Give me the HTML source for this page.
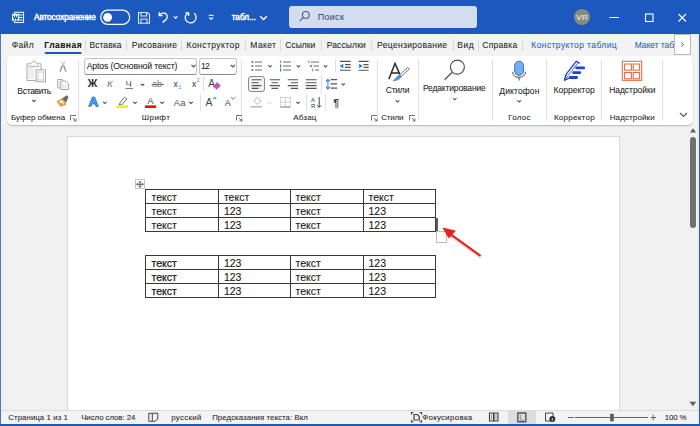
<!DOCTYPE html>
<html><head><meta charset="utf-8">
<style>
*{margin:0;padding:0;box-sizing:border-box}
html,body{width:700px;height:426px;overflow:hidden;background:#f0f0f0;font-family:"Liberation Sans",sans-serif}
.a{position:absolute}
.t{position:absolute;white-space:pre;line-height:1;font-family:"Liberation Sans",sans-serif;-webkit-text-stroke:0.07px currentColor}
.ln{position:absolute;background:#383838;box-shadow:0 0 0.6px rgba(0,0,0,.35)}
svg{position:absolute;overflow:visible}
</style></head><body>
<div class="a" style="left:0;top:126px;width:700px;height:284px;background:#f0f0f0"></div>
<div class="a" style="left:67px;top:136px;width:553px;height:274px;background:#d8d8d8"></div>
<div class="a" style="left:68px;top:137px;width:551px;height:273px;background:#fff"></div>
<div class="a" style="left:0;top:0;width:700px;height:34px;background:#1b59be"></div>
<div class="a" style="left:0;top:34px;width:700px;height:92px;background:#f3f3f3"></div>
<div class="a" style="left:7px;top:56px;width:686px;height:69px;background:#fff;border-radius:5px;box-shadow:0 1px 1.5px rgba(0,0,0,.25)"></div>
<div class="a" style="left:0;top:410px;width:700px;height:16px;background:#f3f3f3;border-top:1px solid #dcdcdc"></div>
<div class="a" style="left:508px;top:410px;width:28px;height:14px;background:#dcdcdc"></div>
<div class="a" style="left:0;top:34px;width:1px;height:392px;background:#4f72cf"></div><div class="a" style="left:1px;top:34px;width:1px;height:376px;background:#f8f8f8"></div>
<div class="a" style="left:698px;top:34px;width:1px;height:392px;background:#dfe6f3"></div><div class="a" style="left:699px;top:34px;width:1px;height:392px;background:#2a5fc8"></div>
<div class="a" style="left:0;top:424px;width:700px;height:2px;background:#1b59be"></div>
<div class="a" style="left:574.2px;top:9.2px;width:15.8px;height:15.8px;border-radius:50%;background:#878a7e"></div>
<!-- search box -->
<div class="a" style="left:289px;top:6px;width:188px;height:22px;background:#d3ddef;border-radius:3px"></div>
<!-- font boxes -->
<div class="a" style="left:84px;top:58px;width:113px;height:17px;border:1px solid #c4c4c4;border-bottom-color:#8a8a8a;border-radius:3px;background:#fff"></div>
<div class="a" style="left:199px;top:58px;width:38px;height:17px;border:1px solid #c4c4c4;border-bottom-color:#8a8a8a;border-radius:3px;background:#fff"></div>
<!-- align left selected -->
<div class="a" style="left:248px;top:75.8px;width:17px;height:16px;border:1.4px solid #8a8a8a;border-radius:3px;background:#f3f3f3"></div>
<!-- tab scroll button -->
<div class="a" style="left:674px;top:34px;width:17px;height:21px;background:#fff;border:1px solid #b8b8b8"></div>
<!-- scrollbar -->
<div class="a" style="left:690px;top:137px;width:6px;height:91px;background:#6f6f6f;border-radius:3px"></div>
<!-- page table handle squares -->
<div class="a" style="left:135px;top:179px;width:10px;height:10px;border:1px solid #c4c4c4;background:#fff"></div>
<div class="a" style="left:436px;top:231px;width:11px;height:12px;border:1px solid #bdbdbd;background:#fff"></div>
<div class="a" style="left:435px;top:218px;width:3px;height:13px;background:#5e5e5e"></div>

<svg class="a" style="left:0;top:0" width="700" height="426" viewBox="0 0 700 426">
<g fill="none" stroke="#fff" stroke-width="1.1">
 <!-- word icon -->
 <rect x="14.5" y="12.3" width="9" height="10.2" stroke="#e8eefa"/>
 <path d="M19.5 15H22.5M19.5 17.5H22.5M19.5 20H22.5" stroke="#fff"/>
 <rect x="12" y="13.8" width="7.3" height="7" fill="#fff" stroke="none"/>
 <path d="M13.2 15.3L14.4 19.6L15.6 16.4L16.8 19.6L18 15.3" stroke="#1b59be" stroke-width="1.1"/>
 <!-- toggle -->
 <rect x="100.7" y="10.2" width="29" height="14.2" rx="7.1" stroke-width="1.3"/>
 <circle cx="107.6" cy="17.3" r="4.4" fill="#fff" stroke="none"/>
 <!-- save -->
 <path d="M138.5 12.5H147.5L149.5 14.5V23.3H138.5Z" stroke="#dfe6f4"/>
 <path d="M141 12.5V16H146.5V12.5M141 23.3V19H147V23.3" stroke="#dfe6f4"/>
 <!-- undo -->
 <path d="M159.3 15.2C161.5 12.2 166.8 12.2 167.2 16.3C167.5 19.3 165 21 162.5 22.3" stroke-width="1.3"/>
 <path d="M159.2 12.3V15.6H162.5" stroke-width="1.3"/>
 <path d="M173.8 16.4L175.6 18.2L177.4 16.4" stroke-width="1.25"/>
 <!-- redo -->
 <path d="M188.2 13.3C185.6 14.7 184.8 17.5 185.7 19.7C186.9 22.8 191.2 23.8 194 21.7C196.6 19.7 196.9 15.5 194.2 13.2" stroke-width="1.3"/>
 <path d="M185.3 12.8H188.6V16.1" stroke-width="1.3"/>
 <!-- customize -->
 <path d="M208.8 15.3H213.5" stroke-width="1.1"/>
 <path d="M209.2 17.5L211.2 19.3L213.2 17.5" stroke-width="1.1"/>
 <!-- doc chevron -->
 <path d="M260.2 16.3L263.5 19.5L266.8 16.3" stroke-width="1.4"/>
 <!-- window controls -->
 <path d="M609.5 17.5H619" stroke-width="1"/>
 <rect x="645.5" y="14" width="7.5" height="7.5" stroke-width="1.1"/>
 <path d="M678.5 14L686 21.5M686 14L678.5 21.5" stroke-width="1.1"/>
</g>
<!-- search icon -->
<g fill="none" stroke="#4a5a7c" stroke-width="1.1">
 <circle cx="305.8" cy="14.9" r="3.4"/>
 <path d="M303.4 17.3L299.6 21.1"/>
</g>
<!-- tab separators -->
<g stroke="#d9d9d9" stroke-width="1">
 <path d="M85.5 39.5V51M126.5 39.5V51M181.5 39.5V51M245.5 39.5V51M280.5 39.5V51M321.5 39.5V51M371.5 39.5V51M453.5 39.5V51M478.5 39.5V51M522.5 39.5V51"/>
</g>
<rect x="44.6" y="52" width="37" height="2" rx="1" fill="#1b59be"/>
<path d="M681.2 42.5L683.6 44.5L681.2 46.5" fill="none" stroke="#666" stroke-width="1"/>
<!-- group separators -->
<g stroke="#e0e0e0" stroke-width="1">
 <path d="M78.5 60V121M241.5 60V121M377.5 60V121M418.5 60V121M492.5 60V121M546.5 60V121M601.5 60V121M662.5 60V121"/>
 <path d="M203.5 77V92M200.5 95V111M321.5 75V93M306.5 94V111M325.5 94V111M335.5 59V72"/>
</g>
<!-- chevrons dark -->
<g fill="none" stroke="#555" stroke-width="1.1">
 <path d="M32.3 100L34 101.7L35.7 100"/>
 <path d="M191.5 65L193.5 67L195.5 65M230.8 65L232.8 67L234.8 65"/>
 <path d="M140.8 83.8L142.5 85.4L144.2 83.8M103 101.8L104.8 103.4L106.6 101.8M133.2 101.8L135 103.4L136.8 101.8M160.3 101.8L162.1 103.4L163.9 101.8M189.2 101.8L191 103.4L192.8 101.8"/>
 <path d="M268.3 65.3L270 67L271.7 65.3M296.8 65.3L298.5 67L300.2 65.3M323.8 65.3L325.5 67L327.2 65.3M341.5 83.3L343.2 85L344.9 83.3M296.3 101.8L298 103.4L299.7 101.8"/>
 <path d="M395.7 100.3L397.5 102L399.3 100.3M453.1 98.2L454.8 99.8L456.5 98.2M517.4 100.3L519.2 102L521 100.3"/>
 <path d="M680 113L683.5 116.5L687 113"/>
</g>
<path d="M267.8 102.3L269.6 103.8L271.4 102.3" fill="none" stroke="#c8c8c8" stroke-width="1"/>
<!-- launchers -->
<g fill="none" stroke="#666" stroke-width="0.9">
 <path d="M70.5 120.5V115.5H76M73 118L76 121M76 118.5V121H73.5"/>
 <path d="M236.5 120.5V115.5H242M239 118L242 121M242 118.5V121H239.5"/>
 <path d="M371.5 120.5V115.5H377M374 118L377 121M377 118.5V121H374.5"/>
 <path d="M409.5 120.5V115.5H415M412 118L415 121M415 118.5V121H412.5"/>
</g>
<!-- clipboard icons -->
<g fill="none" stroke="#a9a9a9" stroke-width="1">
 <path d="M30 63.8H27V80.5H36"/>
 <path d="M38 63.8H41V69.5"/>
 <path d="M29.9 64.3L33.8 61L38 64.3M28.5 66.3H39.5"/>
 <path d="M29 66V79M31 66V79M33 66V79"  stroke="#d0d0d0" stroke-width="0.7"/>
 <rect x="36" y="69.8" width="9.5" height="12"/>
 <rect x="38" y="72" width="5.5" height="8" stroke="#c8c8c8"/>
 <path d="M60.8 61.2L64.2 66.5M65.2 61.2L61.8 66.5" stroke="#b5b5b5" stroke-width="0.9"/>
 <path d="M62 66.3L60.3 71M64 66.3L65.7 71" stroke="#a8a8a8" stroke-width="1.8" stroke-linecap="round"/>
 <path d="M57.7 79.5H62.5V88H57.7Z"/>
 <path d="M60.8 81H65.5L68.5 84V89.5H60.8Z" fill="#fff"/>
 <path d="M59.3 81.5V87M63 84V88M65.5 85V88" stroke="#cfcfcf" stroke-width="0.8"/>
</g>
<path d="M57.6 101.6L62.6 98.8L65.4 104.2L61 106Z" fill="#fff3e0" stroke="#f08a20" stroke-width="1.3" stroke-linejoin="round"/>
<path d="M58.5 102.5L64.5 103.8L61 105.6Z" fill="#f59a30"/>
<path d="M62.3 98.3L66.3 95.6C67.6 95.2 68.5 96.3 68.2 97.6L66 103Z" fill="#6a6a6a"/>
<!-- font group icons -->
<g font-family="Liberation Sans" >
 <text x="87.8" y="87.4" font-size="10.5" font-weight="bold" fill="#2a2a2a">Ж</text>
 <text x="107" y="87.2" font-size="9.5" font-style="italic" fill="#6e6e6e">К</text>
 <text x="125.6" y="87.2" font-size="9.5" fill="#5a5a5a">Ч</text>
 <text x="152" y="87.2" font-size="9" fill="#777">ab</text>
 <text x="173.5" y="86.8" font-size="8.5" fill="#333">x</text>
 <text x="192" y="86.8" font-size="8.5" fill="#333">x</text>
 <text x="178.2" y="89.4" font-size="5" fill="#2f8fe0">2</text>
 <text x="196.8" y="82" font-size="5" fill="#2f8fe0">2</text>
 <text x="208.2" y="87.2" font-size="10" fill="#444">A</text>
 <text x="173.8" y="105.6" font-size="9.5" fill="#555">Aa</text>
 <text x="205.6" y="105.6" font-size="10.5" fill="#444">A</text>
 <text x="224.8" y="105.6" font-size="9" fill="#444">A</text>
 <text x="147.4" y="104.2" font-size="9" fill="#444">A</text>
</g>
<path d="M125.5 88.6H133" stroke="#666" stroke-width="0.9"/>
<path d="M151.5 84.5H164" stroke="#666" stroke-width="0.9"/>
<path d="M213.5 86.2L217.2 82.6L220.3 85.7L216.6 89.3Z" fill="#c44fc8" stroke="#a030b0" stroke-width="0.6"/>
<path d="M212.5 98.8L214.8 96.8L217 98.8Z" fill="#3b8de0"/>
<path d="M231 97.2L233.2 99.2L235.4 97.2" fill="none" stroke="#3b8de0" stroke-width="1"/>
<!-- blue A -->
<path d="M88.6 106.4L92.3 97H94.7L98.4 106.4H96L95.1 104H91.9L91 106.4ZM92.6 102H94.4L93.5 99.4Z" fill="#4a9ae8" stroke="#2a6fc4" stroke-width="0.7"/>
<!-- highlighter -->
<path d="M119.5 103.5L124.5 97.2L126.8 99L121.7 105Z" fill="none" stroke="#707070" stroke-width="1"/>
<path d="M119.3 103.6L118.6 105.2L121.2 105" fill="#707070"/>
<rect x="116.5" y="105.2" width="11.5" height="2.8" fill="#f6ee1a"/>
<rect x="145" y="105.4" width="11.2" height="2.6" fill="#e81010"/>
<!-- paragraph icons -->
<g fill="#2f7fd8">
 <circle cx="252.4" cy="62" r="1.1"/><circle cx="252.4" cy="66" r="1.1"/><circle cx="252.4" cy="70" r="1.1"/>
 <rect x="280.2" y="60.5" width="0.9" height="2.6"/><rect x="280" y="64.5" width="1.2" height="3"/><rect x="280" y="68.5" width="1.2" height="3"/>
 <rect x="308.5" y="60.5" width="0.9" height="2.6"/><circle cx="311" cy="66" r="1.1"/><rect x="312.3" y="68.6" width="0.9" height="2.8"/>
</g>
<g stroke="#6a6a6a" stroke-width="1">
 <path d="M255 62H262M255 66H262M255 70H262"/>
 <path d="M283 62H291M283 66H291M283 70H291"/>
 <path d="M311 62H319M313.5 66H319M315 70H319"/>
</g>
<g stroke="#555" stroke-width="1.1">
 <path d="M251.7 79.8H261.4M251.7 82.7H258.5M251.7 85.6H261.4M251.7 88.4H258.5"/>
 <path d="M269.7 79.8H280M271.5 82.7H278.2M269.7 85.6H280M271.5 88.4H278.2"/>
 <path d="M287.7 79.8H298M290.8 82.7H298M287.7 85.6H298M290.8 88.4H298"/>
 <path d="M305.7 79.8H316.6M305.7 82.7H316.6M305.7 85.6H316.6M305.7 88.4H316.6"/>
 <path d="M340 61.4H350.7M345 64.6H350.7M345 67.4H350.7M340 70.3H350.7"/>
 <path d="M358.6 61.4H368.6M363.5 64.6H368.6M363.5 67.4H368.6M358.6 70.3H368.6"/>
 <path d="M330.7 79.6H337.1M330.7 83.9H337.1M330.7 88.1H337.1"/>
</g>
<g fill="#2f7fd8" stroke="#2f7fd8" stroke-width="0.8">
 <path d="M340.2 66L343 64.3V67.7Z"/>
 <path d="M362.2 66L359.4 64.3V67.7Z"/>
 <path d="M327.9 80.5V88" fill="none" stroke-width="1"/>
 <path d="M326 81.5L327.9 79.6L329.8 81.5M326 87L327.9 88.9L329.8 87" fill="none" stroke-width="1.1"/>
</g>
<!-- shading & borders -->
<path d="M254 101L257.5 97.2L261 101L257.5 104.3Z" fill="none" stroke="#bdbdbd" stroke-width="1"/>
<rect x="251" y="106" width="11" height="1.5" fill="#b8b8b8"/>
<g fill="none" stroke="#cfcfcf" stroke-width="0.9">
 <rect x="280.5" y="97.5" width="9.8" height="9.5"/>
 <path d="M285.4 97.5V107M280.5 102.2H290.3"/>
</g>
<path d="M280.5 107H290.3" stroke="#8a8a8a" stroke-width="1"/>
<g font-family="Liberation Sans">
 <text x="310.8" y="101.6" font-size="5.8" font-weight="bold" fill="#2f7fd8">A</text>
 <text x="310.8" y="107.6" font-size="6" fill="#333">Я</text>
 <text x="333.2" y="106.8" font-size="10.5" font-weight="bold" fill="#444">¶</text>
</g>
<path d="M319.2 97V107.2M317.3 105.3L319.2 107.4L321.1 105.3" fill="none" stroke="#444" stroke-width="1"/>
<!-- styles icon -->
<path d="M388.8 79.3L395 63.5L399.8 74.4M391 73H400" fill="none" stroke="#2a2a2a" stroke-width="1.45"/>
<path d="M399.6 74.8L407.6 67.6L409.2 69.3L401.2 76.4Z" fill="#fff" stroke="#666" stroke-width="0.9"/>
<path d="M393 80.8C396.2 80.8 399.2 79.6 401.5 76.8L399.5 74.8C397.4 75.6 396.6 78.6 393 80.8Z" fill="#4a94e4" stroke="#2f78cf" stroke-width="0.6"/>
<!-- magnifier -->
<circle cx="457.4" cy="67.1" r="7" fill="none" stroke="#555" stroke-width="1.2"/>
<path d="M452.2 72.3L444.6 79.7" stroke="#555" stroke-width="1.3"/>
<!-- mic -->
<rect x="514.7" y="61.2" width="8.8" height="14.2" rx="4.4" fill="#72aef0" stroke="#3274c8" stroke-width="1"/>
<path d="M512.6 71.8C512.6 75.3 515.5 77.4 519 77.4C522.5 77.4 525.5 75.3 525.5 71.8M519 77.4V80.5" fill="none" stroke="#6b5a50" stroke-width="1.1"/>
<!-- corrector -->
<path d="M564.3 80.5L566.2 74.2L576.4 61.2L579.8 63.4" fill="none" stroke="#1c43d4" stroke-width="1.3" stroke-linejoin="round"/>
<path d="M564.3 80.5L577.6 63.2" fill="none" stroke="#1c43d4" stroke-width="0.8"/>
<path d="M564.3 80.5L569.5 77.8" fill="none" stroke="#1c43d4" stroke-width="1.3"/>
<g stroke="#1c43d4" stroke-width="2.8" stroke-linecap="round">
 <path d="M576.6 67.8H583.8M573.6 72.7H579.8M570.2 77.5H576.6"/>
</g>
<!-- addins -->
<g fill="none" stroke="#e6693f" stroke-width="1.05">
 <rect x="622.3" y="61.3" width="19.4" height="19"/>
 <rect x="624.6" y="64" width="6.8" height="6.2"/>
 <rect x="633.2" y="64" width="6.4" height="6.2"/>
 <rect x="624.6" y="72.5" width="6.8" height="6.3"/>
 <rect x="633.2" y="72.5" width="6.4" height="6.3"/>
</g>
<!-- scrollbar arrows -->
<path d="M690 132.5L693 128.3L696 132.5Z" fill="#606060"/>
<path d="M689.5 401.8H696.3L692.9 406.2Z" fill="#606060"/>
<!-- table move handle -->
<g stroke="#444" stroke-width="0.9" fill="none">
 <path d="M140 181.3V187.3M136.8 184.3H143.2"/>
 <path d="M139 182.3L140 181.2L141 182.3M139 186.3L140 187.4L141 186.3M137.8 183.3L136.7 184.3L137.8 185.3M142.2 183.3L143.3 184.3L142.2 185.3"/>
</g>
<!-- arrow -->
<g>
 <path d="M480 255.5L448 233" stroke="rgba(0,0,0,0.12)" stroke-width="3.5" transform="translate(1,1.5)"/>
 <path d="M479.8 255.4L449 233.2" stroke="#e8211c" stroke-width="2.1" stroke-linecap="round"/>
 <path d="M443 228L455.3 230.9L448.8 237.9Z" fill="#e8211c" stroke="#e8211c" stroke-width="0.8" stroke-linejoin="round"/>
</g>
<!-- status icons -->
<g fill="none" stroke="#444" stroke-width="1">
 <path d="M148.8 413.3H152.3V421.3H148.8Z"/>
 <path d="M152.3 413.3H157.8V419L155 421.3H152.3"/>
 <path d="M411.5 414.5V412.5H413.5M419.5 412.5H421.5V414.5M421.5 420V422H419.5M413.5 422H411.5V420" stroke-width="1.2"/>
 <path d="M414 414.5H417.3L419.3 416.5V420H414Z" stroke-width="1.2"/>
 <path d="M489.5 413H493.5V421H489.5ZM494 413H498V421H494Z" stroke="#3a3a3a" stroke-width="1.1"/>
 <path d="M491.5 414.5V419.5M496 414.5V419.5" stroke="#777" stroke-width="0.8"/>
 <path d="M517.8 413H525.8V421.8H517.8Z" stroke="#555" stroke-width="1.4"/>
 <path d="M520.3 414.5V420H524" stroke="#888" stroke-width="0.9"/>
 <path d="M545.5 413H553V421H545.5Z"/>
 <path d="M568 417.5H573.8M575 417.5H648M650.5 417.5H656M653.2 414.7V420.3" stroke="#666"/>
</g>
<circle cx="552.3" cy="419" r="3" fill="#333"/>
<path d="M552.3 418.2V420.6" stroke="#fff" stroke-width="0.9"/>
<rect x="610.2" y="413.8" width="3.5" height="7.5" fill="#555"/>
</svg>

<div class="t" style="left:34.00px;top:13.56px;font-size:8.2px;font-weight:normal;color:#fff;letter-spacing:-0.056px;-webkit-text-stroke:0.45px #fff">Автосохранение</div><div class="t" style="left:231.70px;top:13.56px;font-size:8.2px;font-weight:normal;color:#fff;letter-spacing:0.010px;-webkit-text-stroke:0.45px #fff">табл...</div><div class="t" style="left:317.70px;top:13.38px;font-size:9px;font-weight:normal;color:#2e4270;letter-spacing:0.312px;-webkit-text-stroke:0px">Поиск</div><div class="t" style="left:576.30px;top:13.93px;font-size:8px;font-weight:normal;color:#f4f4f4;letter-spacing:0.275px">VR</div><div class="t" style="left:11.70px;top:40.60px;font-size:8.5px;font-weight:normal;color:#262626;letter-spacing:0.365px">Файл</div><div class="t" style="left:44.30px;top:40.60px;font-size:8.5px;font-weight:bold;color:#111;letter-spacing:0.454px">Главная</div><div class="t" style="left:89.50px;top:40.60px;font-size:8.5px;font-weight:normal;color:#262626;letter-spacing:0.051px">Вставка</div><div class="t" style="left:131.70px;top:40.60px;font-size:8.5px;font-weight:normal;color:#262626;letter-spacing:0.298px">Рисование</div><div class="t" style="left:186.50px;top:40.60px;font-size:8.5px;font-weight:normal;color:#262626;letter-spacing:0.443px">Конструктор</div><div class="t" style="left:250.30px;top:40.60px;font-size:8.5px;font-weight:normal;color:#262626;letter-spacing:0.409px">Макет</div><div class="t" style="left:285.20px;top:40.60px;font-size:8.5px;font-weight:normal;color:#262626;letter-spacing:0.052px">Ссылки</div><div class="t" style="left:326.70px;top:40.60px;font-size:8.5px;font-weight:normal;color:#262626;letter-spacing:0.135px">Рассылки</div><div class="t" style="left:377.10px;top:40.60px;font-size:8.5px;font-weight:normal;color:#262626;letter-spacing:0.335px">Рецензирование</div><div class="t" style="left:457.20px;top:40.60px;font-size:8.5px;font-weight:normal;color:#262626;letter-spacing:0.555px">Вид</div><div class="t" style="left:482.30px;top:40.60px;font-size:8.5px;font-weight:normal;color:#262626;letter-spacing:0.257px">Справка</div><div class="t" style="left:531.30px;top:40.60px;font-size:8.5px;font-weight:normal;color:#2b5fc7;letter-spacing:0.410px">Конструктор таблиц</div><div class="t" style="left:17.30px;top:86.70px;font-size:8.5px;font-weight:normal;color:#262626;letter-spacing:-0.290px">Вставить</div><div class="t" style="left:385.70px;top:86.20px;font-size:8.5px;font-weight:normal;color:#262626;letter-spacing:-0.200px">Стили</div><div class="t" style="left:422.90px;top:84.40px;font-size:8.5px;font-weight:normal;color:#262626;letter-spacing:-0.144px">Редактирование</div><div class="t" style="left:499.30px;top:86.80px;font-size:8.5px;font-weight:normal;color:#262626;letter-spacing:0.119px">Диктофон</div><div class="t" style="left:553.45px;top:86.20px;font-size:8.5px;font-weight:normal;color:#262626;letter-spacing:0.033px">Корректор</div><div class="t" style="left:609.20px;top:86.00px;font-size:8.5px;font-weight:normal;color:#262626;letter-spacing:-0.049px">Надстройки</div><div class="t" style="left:11.00px;top:113.83px;font-size:8px;font-weight:normal;color:#262626;letter-spacing:-0.024px">Буфер обмена</div><div class="t" style="left:141.70px;top:113.73px;font-size:8px;font-weight:normal;color:#262626;letter-spacing:0.468px">Шрифт</div><div class="t" style="left:293.30px;top:113.83px;font-size:8px;font-weight:normal;color:#262626;letter-spacing:0.162px">Абзац</div><div class="t" style="left:381.30px;top:113.83px;font-size:8px;font-weight:normal;color:#262626;letter-spacing:-0.237px">Стили</div><div class="t" style="left:508.30px;top:113.83px;font-size:8px;font-weight:normal;color:#262626;letter-spacing:0.205px">Голос</div><div class="t" style="left:553.95px;top:113.83px;font-size:8px;font-weight:normal;color:#262626;letter-spacing:0.271px">Корректор</div><div class="t" style="left:609.70px;top:113.83px;font-size:8px;font-weight:normal;color:#262626;letter-spacing:0.116px">Надстройки</div><div class="t" style="left:86.70px;top:62.14px;font-size:8.7px;font-weight:normal;color:#262626;letter-spacing:-0.138px">Aptos (Основной текст)</div><div class="t" style="left:200.95px;top:62.14px;font-size:8.7px;font-weight:normal;color:#262626;letter-spacing:-0.722px">12</div><div class="t" style="left:8.30px;top:414.10px;font-size:7.8px;font-weight:normal;color:#262626;letter-spacing:0.082px">Страница 1 из 1</div><div class="t" style="left:81.20px;top:414.10px;font-size:7.8px;font-weight:normal;color:#262626;letter-spacing:-0.031px">Число слов: 24</div><div class="t" style="left:171.20px;top:414.10px;font-size:7.8px;font-weight:normal;color:#262626;letter-spacing:0.369px">русский</div><div class="t" style="left:212.20px;top:414.10px;font-size:7.8px;font-weight:normal;color:#262626;letter-spacing:0.075px">Предсказания текста: Вкл</div><div class="t" style="left:422.20px;top:414.10px;font-size:7.8px;font-weight:normal;color:#262626;letter-spacing:0.339px">Фокусировка</div><div class="t" style="left:664.70px;top:414.10px;font-size:7.8px;font-weight:normal;color:#262626;letter-spacing:-0.102px">100 %</div><div class="a" style="left:634px;top:36px;width:40px;height:16px;overflow:hidden"><div class="t" style="left:0.7px;top:4.60px;font-size:8.5px;color:#2b5fc7;letter-spacing:-0.05px">Макет таблицы</div></div>
<div class="ln" style="left:145px;top:189px;width:291px;height:1px"></div>
<div class="ln" style="left:145px;top:203px;width:291px;height:1px"></div>
<div class="ln" style="left:145px;top:217px;width:291px;height:1px"></div>
<div class="ln" style="left:145px;top:231px;width:291px;height:1px"></div>
<div class="ln" style="left:145px;top:189px;width:1px;height:43px"></div>
<div class="ln" style="left:218px;top:189px;width:1px;height:43px"></div>
<div class="ln" style="left:290px;top:189px;width:1px;height:43px"></div>
<div class="ln" style="left:363px;top:189px;width:1px;height:43px"></div>
<div class="ln" style="left:435px;top:189px;width:1px;height:43px"></div>
<div class="t" style="left:151.60px;top:192.31px;font-size:10.5px;color:#1a1a1a;-webkit-text-stroke:0.12px #1a1a1a">текст</div>
<div class="t" style="left:223.90px;top:192.31px;font-size:10.5px;color:#1a1a1a;-webkit-text-stroke:0.12px #1a1a1a">текст</div>
<div class="t" style="left:295.60px;top:192.31px;font-size:10.5px;color:#1a1a1a;-webkit-text-stroke:0.12px #1a1a1a">текст</div>
<div class="t" style="left:368.50px;top:192.31px;font-size:10.5px;color:#1a1a1a;-webkit-text-stroke:0.12px #1a1a1a">текст</div>
<div class="t" style="left:151.60px;top:206.31px;font-size:10.5px;color:#1a1a1a;-webkit-text-stroke:0.12px #1a1a1a">текст</div>
<div class="t" style="left:223.90px;top:206.31px;font-size:10.5px;color:#1a1a1a;-webkit-text-stroke:0.12px #1a1a1a">123</div>
<div class="t" style="left:295.60px;top:206.31px;font-size:10.5px;color:#1a1a1a;-webkit-text-stroke:0.12px #1a1a1a">текст</div>
<div class="t" style="left:368.50px;top:206.31px;font-size:10.5px;color:#1a1a1a;-webkit-text-stroke:0.12px #1a1a1a">123</div>
<div class="t" style="left:151.60px;top:220.31px;font-size:10.5px;color:#1a1a1a;-webkit-text-stroke:0.12px #1a1a1a">текст</div>
<div class="t" style="left:223.90px;top:220.31px;font-size:10.5px;color:#1a1a1a;-webkit-text-stroke:0.12px #1a1a1a">123</div>
<div class="t" style="left:295.60px;top:220.31px;font-size:10.5px;color:#1a1a1a;-webkit-text-stroke:0.12px #1a1a1a">текст</div>
<div class="t" style="left:368.50px;top:220.31px;font-size:10.5px;color:#1a1a1a;-webkit-text-stroke:0.12px #1a1a1a">123</div>
<div class="ln" style="left:145px;top:255px;width:291px;height:1px"></div>
<div class="ln" style="left:145px;top:269px;width:291px;height:1px"></div>
<div class="ln" style="left:145px;top:283px;width:291px;height:1px"></div>
<div class="ln" style="left:145px;top:297px;width:291px;height:1px"></div>
<div class="ln" style="left:145px;top:255px;width:1px;height:43px"></div>
<div class="ln" style="left:218px;top:255px;width:1px;height:43px"></div>
<div class="ln" style="left:290px;top:255px;width:1px;height:43px"></div>
<div class="ln" style="left:363px;top:255px;width:1px;height:43px"></div>
<div class="ln" style="left:435px;top:255px;width:1px;height:43px"></div>
<div class="t" style="left:151.60px;top:258.31px;font-size:10.5px;color:#1a1a1a;-webkit-text-stroke:0.25px #1a1a1a">текст</div>
<div class="t" style="left:223.90px;top:258.31px;font-size:10.5px;color:#1a1a1a;-webkit-text-stroke:0.12px #1a1a1a">123</div>
<div class="t" style="left:295.60px;top:258.31px;font-size:10.5px;color:#1a1a1a;-webkit-text-stroke:0.12px #1a1a1a">текст</div>
<div class="t" style="left:368.50px;top:258.31px;font-size:10.5px;color:#1a1a1a;-webkit-text-stroke:0.12px #1a1a1a">123</div>
<div class="t" style="left:151.60px;top:272.31px;font-size:10.5px;color:#1a1a1a;-webkit-text-stroke:0.25px #1a1a1a">текст</div>
<div class="t" style="left:223.90px;top:272.31px;font-size:10.5px;color:#1a1a1a;-webkit-text-stroke:0.12px #1a1a1a">123</div>
<div class="t" style="left:295.60px;top:272.31px;font-size:10.5px;color:#1a1a1a;-webkit-text-stroke:0.12px #1a1a1a">текст</div>
<div class="t" style="left:368.50px;top:272.31px;font-size:10.5px;color:#1a1a1a;-webkit-text-stroke:0.12px #1a1a1a">123</div>
<div class="t" style="left:151.60px;top:286.31px;font-size:10.5px;color:#1a1a1a;-webkit-text-stroke:0.25px #1a1a1a">текст</div>
<div class="t" style="left:223.90px;top:286.31px;font-size:10.5px;color:#1a1a1a;-webkit-text-stroke:0.12px #1a1a1a">123</div>
<div class="t" style="left:295.60px;top:286.31px;font-size:10.5px;color:#1a1a1a;-webkit-text-stroke:0.12px #1a1a1a">текст</div>
<div class="t" style="left:368.50px;top:286.31px;font-size:10.5px;color:#1a1a1a;-webkit-text-stroke:0.12px #1a1a1a">123</div>
</body></html>
